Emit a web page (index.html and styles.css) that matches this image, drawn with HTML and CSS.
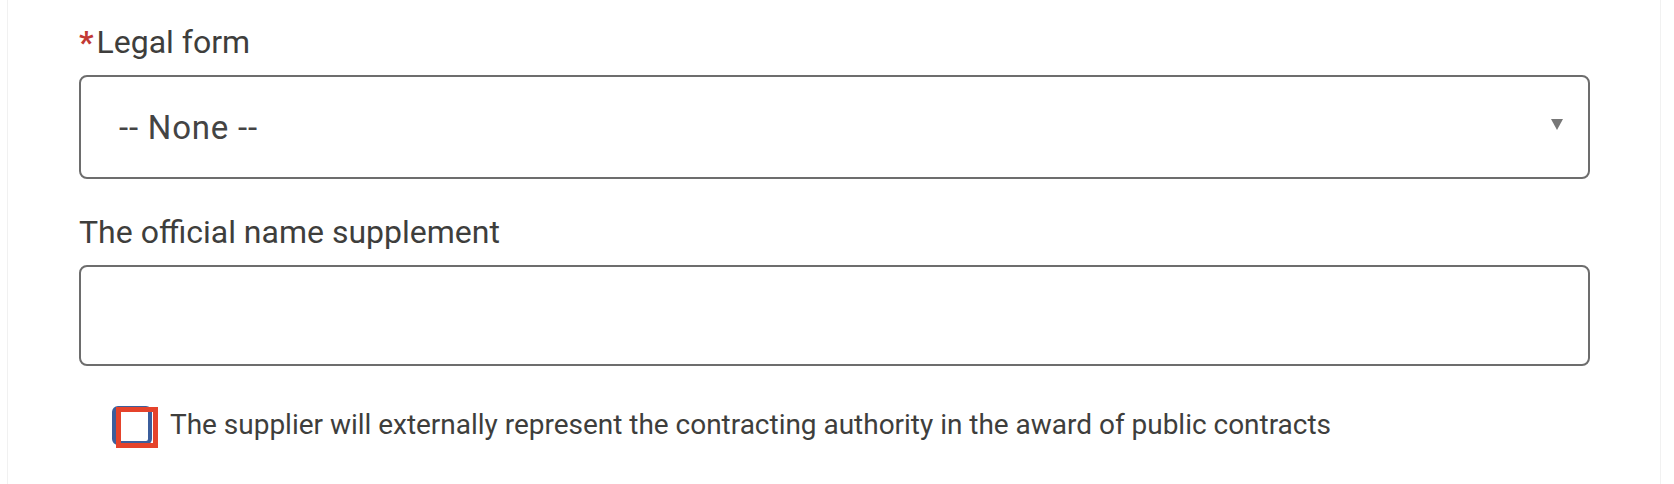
FILE: index.html
```html
<!DOCTYPE html>
<html lang="en">
<head>
    <meta charset="UTF-8">
    <title>Supplier details</title>
    <link rel="stylesheet" href="styles.css">
</head>
<body>
    <div class="page">
        <div class="field">
            <label class="field-label" for="legal-form"><abbr class="required" title="required">*</abbr>Legal form</label>
            <div class="select-wrap">
                <select class="select" id="legal-form">
                    <option>-- None --</option>
                </select>
                <span class="select-arrow"></span>
            </div>
        </div>

        <div class="field field-second">
            <label class="field-label" for="name-supplement">The official name supplement</label>
            <input class="text-input" id="name-supplement" type="text">
        </div>

        <label class="check-row">
            <span class="check-box">
                <span class="check-focus"></span>
            </span>
            <span class="check-text">The supplier will externally represent the contracting authority in the award of public contracts</span>
        </label>
    </div>
</body>
</html>
```

FILE: styles.css
```css
body {
    font-family: Roboto, 'Liberation Sans', sans-serif;
    background-color: #fff;
    color: #3e3e3c;
    margin: 0;
    padding: 0;
}

.page {
    height: 484px;
    margin: 0 13px 0 7px;
    padding: 22px 70px 0 71px;
    border-left: 1px solid #f1f1f1;
    border-right: 1px solid #f1f1f1;
    box-sizing: border-box;
}

.field-label {
    display: block;
    font-size: 32px;
    line-height: 40px;
    margin-bottom: 13px;
}

.required {
    color: #c23934;
    font-weight: bold;
    text-decoration: none;
    border: none;
    margin-right: 3px;
}

.field-second {
    margin-top: 33px;
}

.select-wrap {
    position: relative;
}

.select {
    display: block;
    width: 100%;
    height: 104px;
    padding: 0 0 0 38px;
    border: 2px solid #6d6d6d;
    border-radius: 8px;
    background-color: #fff;
    font-family: inherit;
    font-size: 33px;
    letter-spacing: 0.8px;
    color: #444;
    appearance: none;
    -webkit-appearance: none;
    box-sizing: border-box;
    outline: none;
}

.select-arrow {
    position: absolute;
    right: 27px;
    top: 44px;
    width: 0;
    height: 0;
    border-left: 6px solid transparent;
    border-right: 6px solid transparent;
    border-top: 11px solid #777;
    pointer-events: none;
}

.text-input {
    display: block;
    width: 100%;
    height: 101px;
    border: 2px solid #6d6d6d;
    border-radius: 8px;
    background-color: #fff;
    box-sizing: border-box;
    outline: none;
}

.check-row {
    display: flex;
    align-items: center;
    gap: 18px;
    margin-top: 39px;
    padding-left: 33px;
}

.check-box {
    position: relative;
    width: 40px;
    height: 39px;
    border: 4px solid #3b5e9c;
    border-radius: 6px;
    box-sizing: border-box;
    flex-shrink: 0;
}

.check-focus {
    position: absolute;
    left: 0;
    top: -3px;
    width: 42px;
    height: 41px;
    border: 5px solid #e5432b;
    box-sizing: border-box;
}

.check-text {
    font-size: 28px;
    letter-spacing: -0.02px;
    line-height: 40px;
}
```
